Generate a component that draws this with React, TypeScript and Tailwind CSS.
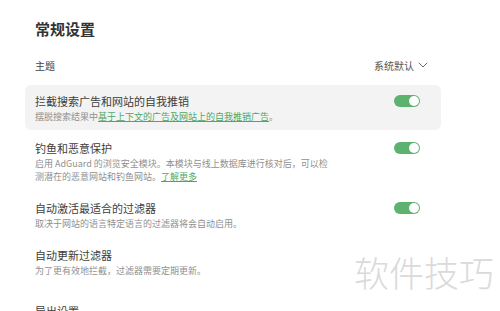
import React from "react";

const font = { fontFamily: '"Noto Sans CJK SC", "Noto Sans", sans-serif' };

function Toggle() {
  return (
    <div className="w-[26px] h-[12px] rounded-full bg-[#5db270] flex items-center justify-end pr-[1px] shrink-0">
      <div className="w-[10px] h-[10px] rounded-full bg-white" />
    </div>
  );
}

type RowProps = {
  title: string;
  children: React.ReactNode;
  toggle?: boolean;
  active?: boolean;
};

function Row({ title, children, toggle = true, active = false }: RowProps) {
  return (
    <div
      className={`flex items-start justify-between pl-[10px] pr-[21px] pt-[9px] pb-[7px] rounded-[6px] ${
        active ? "bg-[#f3f3f3]" : ""
      }`}
    >
      <div className="flex flex-col">
        <div className="text-[11px] leading-[14px] text-[#3d3d3d]">{title}</div>
        <div className="mt-[2px] text-[9px] leading-[13px] text-[#909090] w-[300px]">{children}</div>
      </div>
      {toggle && (
        <div className="mt-[1px]">
          <Toggle />
        </div>
      )}
    </div>
  );
}

function Link({ children }: { children: React.ReactNode }) {
  return <span className="text-[#4da865] underline underline-offset-1">{children}</span>;
}

export default function App() {
  return (
    <div className="relative w-[500px] h-[311px] bg-white overflow-hidden" style={font}>
      <div className="pl-[25px] w-[441px] pt-[19px]">
        <h1 className="pl-[10px] text-[15px] leading-[20px] font-bold text-[#333]">常规设置</h1>

        <div className="flex items-center justify-between pl-[10px] pr-[13px] mt-[16px] h-[20px]">
          <span className="text-[10px] text-[#444]">主题</span>
          <div className="flex items-center gap-[4px] text-[10px] text-[#555]">
            <span>系统默认</span>
            <svg width="10" height="6" viewBox="0 0 10 6" fill="none">
              <path d="M0.8 0.8 L5 5 L9.2 0.8" stroke="#666" strokeWidth="1" />
            </svg>
          </div>
        </div>

        <div className="mt-[10px] flex flex-col gap-[2px]">
          <Row title="拦截搜索广告和网站的自我推销" active>
            摆脱搜索结果中<Link>基于上下文的广告及网站上的自我推销广告</Link>。
          </Row>
          <Row title="钓鱼和恶意保护">
            启用 AdGuard 的浏览安全模块。本模块与线上数据库进行核对后，可以检测潜在的恶意网站和钓鱼网站。
            <Link>了解更多</Link>
          </Row>
          <Row title="自动激活最适合的过滤器">取决于网站的语言特定语言的过滤器将会自动启用。</Row>
          <Row title="自动更新过滤器" toggle={false}>
            为了更有效地拦截，过滤器需要定期更新。
          </Row>
          <div className="pl-[10px] pt-[18px] text-[11px] leading-[14px] text-[#3d3d3d]">导出设置</div>
        </div>
      </div>

      <div className="absolute left-[354px] top-[251px] text-[35px] leading-[42px] font-light text-[#dadada]">
        软件技巧
      </div>
    </div>
  );
}
